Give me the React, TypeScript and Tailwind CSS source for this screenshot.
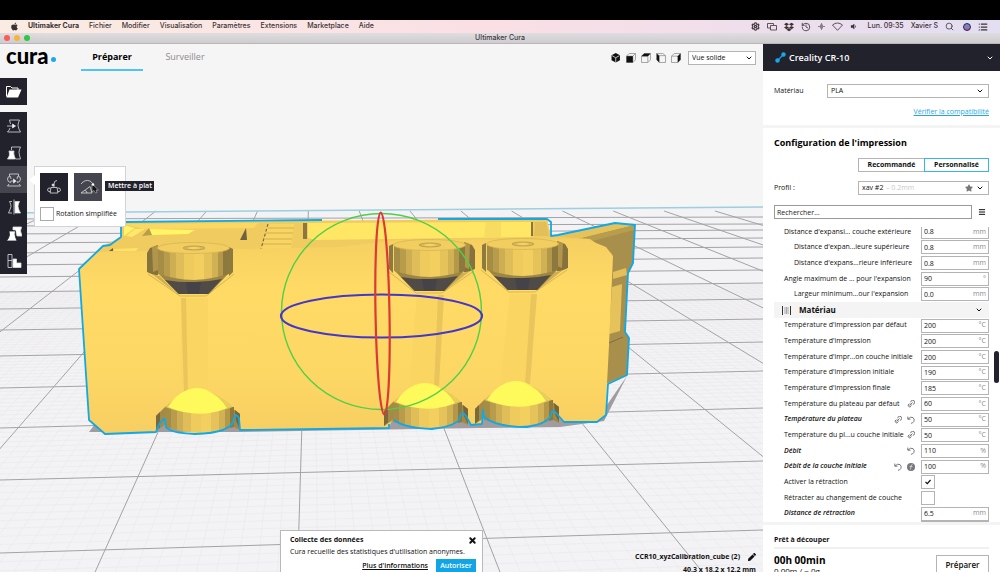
import { useState } from 'react';
import type { ReactNode } from 'react';
import { ChevronDown, History, List, Menu, Search, Settings, X } from 'lucide-react';
import { FaApple, FaDropbox, FaPen, FaStar, FaVolumeDown } from 'react-icons/fa';

const menus = ['Fichier', 'Modifier', 'Visualisation', 'Paramètres', 'Extensions', 'Marketplace', 'Aide'];

type Setting = {
  label: string;
  value?: string;
  unit?: string;
  checked?: boolean;
  indent?: boolean;
  italic?: boolean;
  icons?: ('link' | 'reset' | 'formula')[];
  section?: boolean;
};

const settings: Setting[] = [
  { label: "Distance d'expansi... couche extérieure", value: '0.8', unit: 'mm' },
  { label: "Distance d'expan...ieure supérieure", value: '0.8', unit: 'mm', indent: true },
  { label: "Distance d'expans...rieure inférieure", value: '0.8', unit: 'mm', indent: true },
  { label: "Angle maximum de ... pour l'expansion", value: '90', unit: '°' },
  { label: "Largeur minimum...our l'expansion", value: '0.0', unit: 'mm', indent: true },
  { label: 'Matériau', section: true },
  { label: "Température d'impression par défaut", value: '200', unit: '°C' },
  { label: "Température d'impression", value: '200', unit: '°C' },
  { label: "Température d'impr...on couche initiale", value: '200', unit: '°C' },
  { label: "Température d'impression initiale", value: '190', unit: '°C' },
  { label: "Température d'impression finale", value: '185', unit: '°C' },
  { label: 'Température du plateau par défaut', value: '60', unit: '°C', icons: ['link'] },
  { label: 'Température du plateau', value: '50', unit: '°C', italic: true, icons: ['link', 'reset'] },
  { label: 'Température du pl...u couche initiale', value: '50', unit: '°C', icons: ['link'] },
  { label: 'Débit', value: '110', unit: '%', italic: true, icons: ['reset'] },
  { label: 'Débit de la couche initiale', value: '100', unit: '%', italic: true, icons: ['reset', 'formula'] },
  { label: 'Activer la rétraction', checked: true },
  { label: 'Rétracter au changement de couche', checked: false },
  { label: 'Distance de rétraction', value: '6.5', unit: 'mm', italic: true },
];

const MenuBar = () => (
  <header className="flex h-[13px] shrink-0 items-center bg-gradient-to-r from-[#faece2] via-[#fadfe5] to-[#e3def2] pl-2.5 pr-3 font-[Inter,sans-serif] text-[7px] font-medium text-[#3c3236]">
    <FaApple size={9} className="mr-[9px]" />
    <nav className="flex gap-[10px]">
      <span className="font-bold">Ultimaker Cura</span>
      {menus.map((m) => (
        <span key={m}>{m}</span>
      ))}
    </nav>
    <div className="ml-auto flex items-center gap-[7px]">
      <Settings size={9} strokeWidth={3} />
      <svg width="10" height="9" viewBox="0 0 10 9" fill="none" stroke="currentColor" strokeWidth=".8">
        <path d="M3 6H.5V1.5h6V3M3.500 3.500h6v4.500h-6z" />
      </svg>
      <FaDropbox size={10} />
      <History size={10} />
      <svg width="7" height="9" viewBox="0 0 7 9" fill="none" stroke="#8b7f88" strokeWidth="1">
        <path d="M0 4.500H7M2.500 2.500V6.500M4.500 2.500V6.500M3.500 1V8" />
      </svg>
      <svg width="11" height="9" viewBox="0 0 11 9" fill="none" stroke="currentColor" strokeWidth=".8">
        <path d="M.5 3Q5.500-1 10.500 3L5.500 8.300z" />
      </svg>
      <FaVolumeDown size={7} />
      <span className="pl-1">Lun. 09:35</span>
      <span>Xavier S</span>
      <Search size={9} />
      <span className="ml-0.5 h-2 w-2 rounded-full border border-[#2a2440] bg-gradient-to-b from-[#3f9ad8] to-[#b0559c]" />
      <List size={10} strokeWidth={3} />
    </div>
  </header>
);

const TitleBar = () => (
  <div className="relative flex h-[11px] shrink-0 items-center justify-center border-b border-[#b9b6ba] bg-gradient-to-b from-[#e0dde1] to-[#cfccd0] font-[Inter,sans-serif] text-[7px] text-[#3c393d]">
    <div className="absolute left-1 flex gap-1">
      <i className="h-1.5 w-1.5 rounded-full bg-[#fc5b57]" />
      <i className="h-1.5 w-1.5 rounded-full bg-[#f6b535]" />
      <i className="h-1.5 w-1.5 rounded-full bg-[#2fc843]" />
    </div>
    Ultimaker Cura
  </div>
);

/* Build plate grid: y of every major line at the left and right border */
const leftY = [553, 480, 428, 388, 356, 330, 309, 292, 277, 265, 253, 243, 234, 226, 219];
const rightY = [530, 461, 408, 371, 342, 319, 299, 283, 270, 258, 247, 238, 230, 224, 217];
const horizon = 90;
const lerpDepth = (a: number, b: number, t: number) =>
  horizon + 1 / ((1 - t) / (a - horizon) + t / (b - horizon));

const tenths = [1, 2, 3, 4, 5, 6, 7, 8, 9];

const Grid = () => {
  const major: ReactNode[] = [];
  const minor: ReactNode[] = [];
  const ly = [659, ...leftY];
  const ry = [625, ...rightY];
  ly.forEach((y, i) => {
    major.push(<path key={`h${i}`} d={`M0 ${y}L763 ${ry[i]}`} />);
    if (i < 8) {
      tenths.forEach((t) =>
        minor.push(
          <path key={`h${i}-${t}`} d={`M0 ${lerpDepth(y, ly[i + 1], t / 10)}L763 ${lerpDepth(ry[i], ry[i + 1], t / 10)}`} />,
        ),
      );
    }
  });
  for (let k = -80; k <= 90; k++) {
    const s = -0.03 + 0.042 * k;
    const far = k % 10 === 0 ? 211 : 285;
    const line = <path key={`v${k}`} d={`M${312 + s * (far - horizon)} ${far}L${312 + s * 490} 580`} />;
    (k % 10 === 0 ? major : minor).push(line);
  }
  return (
    <g fill="none">
      <path d="M0 213L763 207V572H0z" fill="#f3f2f4" />
      <g stroke="#e9e8eb" strokeWidth=".6">{minor}</g>
      <g stroke="#a3a2a5" strokeWidth="1">{major}</g>
      <path d="M0 213L763 207" stroke="#9ccfdf" strokeWidth="1.6" />
    </g>
  );
};

const stripes = [0, 6, 12, 18, 26, 36, 46, 54, 60, 65];
const shades = ['#a68d45', '#b89c4b', '#cdae53', '#dfbd58', '#efcb5e', '#f3cf60', '#e5c25a', '#d0b154', '#b3984a', '#8d783d'];

/* One wheel mount: upper cylinder and cone, shaft, lower dome and cylinder.
   The wall of the recess shows on the left or on the right of the upper cylinder. */
const Wheel = ({ x, y, bx, by, wall }: { x: number; y: number; bx: number; by: number; wall: 'left' | 'right' }) => (
  <g>
    <g transform={`translate(${x} ${y})`}>
      <g transform={wall === 'right' ? 'translate(70 0) scale(-1 1)' : undefined}>
        <path d="M-11 5L-8 0 0-3V27L-4 27-11 24z" fill="#85723c" />
        <path d="M-6-1L0-3V22L-5 24z" fill="#b0954a" />
        <path d="M71-1L75 1V24L71 28z" fill="#8e7a40" />
        <path d="M-10 26L22 48 48 48 76 26" fill="none" stroke="#d6b555" />
        <path d="M-6 26L18 45 2 28z" fill="#d0af53" />
      </g>
      <path d="M1 26L20 46H51L70 26z" fill="#9d8644" />
      <path d="M7 32L21 46H50L64 31Q36 37 7 32z" fill="#504b46" />
      <path d="M28 34L30 46H41L43 34z" fill="#464348" />
      {stripes.map((s, i) => {
        const e = stripes[i + 1] ?? 71;
        const dip = (v: number) => 26 + 6 * Math.sin((v / 71) * Math.PI);
        return <path key={s} d={`M${s} 1H${e}V${dip(e)}L${s} ${dip(s)}z`} fill={shades[i]} />;
      })}
      <ellipse cx="35.500" cy="0" rx="36" ry="5.500" fill="#f2cd60" stroke="#d6b656" strokeWidth=".8" />
      <ellipse cx="36" cy="0" rx="11" ry="2" fill="#dab957" stroke="#a58d48" strokeWidth=".6" />
      <ellipse cx="36" cy="0" rx="6" ry="1.200" fill="#f7d263" />
    </g>
    <path d={`M${x + 23} ${y + 50}H${x + 50}L${bx + 43} ${by - 14}H${bx + 16}z`} fill="#fbd562" />
    {wall === 'left' ? (
      <path d={`M${x + 23} ${y + 50}h5L${bx + 23} ${by - 14}h-4z`} fill="#e9c55c" />
    ) : (
      <path d={`M${x + 44} ${y + 50}h6L${bx + 46} ${by - 16}h-5z`} fill="#e9c55c" />
    )}
    <g transform={`translate(${bx} ${by})`}>
      <path d="M-9 9L1-1 3 15-3 20-9 24z" fill="#a38b47" />
      <path d="M-9 9L-5 5V20L-9 24z" fill="#7a6a3b" />
      <path d="M64-1L75 7V23L69 20 67 13z" fill="#a08845" />
      <path d="M70 3L75 7V22L71 14z" fill="#75653a" />
      {stripes.map((s, i) => {
        const e = Math.min(stripes[i + 1] ?? 69, 69);
        const dip = (v: number) => 20 + 6 * Math.sin((v / 69) * Math.PI);
        return <path key={s} d={`M${s} 0H${e}V${dip(e)}L${s} ${dip(s)}z`} fill={shades[i]} />;
      })}
      <path d="M0 0Q3-3 10-8L58-8 68 0Q34 13 0 0z" fill="#e2c259" />
      <path d="M3 0Q10-12 22-17Q32-21 42-17Q54-12 62 1Q34 13 3 0z" fill="#fffa5b" />
      <path d="M40-17Q54-12 62 0L67 0Q56-12 40-17z" fill="#e8cf55" />
    </g>
  </g>
);

const outline =
  'M121 222L322 220M438 219L547 219L551 222V236L558 235L615 223L635 225L633 263L628 273L625 332L629 338L627 375L608 384L606 415L597 422H564L557 414Q552 408 551 415Q549 423 527 427Q496 427 484 417L483 410L482 424L471 425L466 416Q461 409 460 418Q457 426 432 429Q404 428 394 420M389 424V428L240 430L239 418Q235 412 234 419Q232 433 195 434Q170 433 166 427L165 419Q160 420 156 432L105 434L89 420L79 269L103 246L110 245L121 237V222';

const Scene = () => (
  <svg
    className="absolute inset-0 h-full w-full"
    viewBox="0 44 763 528"
    preserveAspectRatio="xMidYMax slice"
    role="img"
    aria-label="CCR10_xyzCalibration_cube"
  >
    <rect y="44" width="763" height="528" fill="#f5f5f5" />
    <Grid />
    {/* shadow */}
    <path d="M89 432L95 424 600 415 627 376 604 421 560 427 480 428 240 432z" fill="#a19c9f" />
    {/* side faces */}
    <path d="M570 241L615 223 635 225 633 263 628 273 625 332 629 338 627 375 606 384 600 250z" fill="#a8904c" />
    <path d="M551 237L615 223 635 225 578 239z" fill="#e6c25a" />
    <path d="M578 239L635 225 634 230 592 241z" fill="#b89d4e" />
    <path d="M613 279L627 275 626 268 613 272z" fill="#e3c05a" />
    <path d="M612 287L622 284 620 331 609 334z" fill="#e5c25b" />
    <path d="M609 343L623 337" stroke="#7e6d3f" />
    {/* top faces */}
    <path d="M121 222L547 219 551 236 590 239 612 254 400 262 85 268 79 269 103 246 121 237z" fill="#f0cb5f" />
    <path d="M124 225L135 228 124 236z" fill="#fff36a" />
    <path d="M126 236L135 229 145 229 132 237z" fill="#ffe968" />
    <path d="M124 224L258 223 254 228 143 229z" fill="#fbd863" />
    <path d="M148 229L195 230 188 234 152 235z" fill="#fff565" />
    <path d="M142 236L149 228 152 235z" fill="#b99d4c" />
    <path d="M240 240L246 228 247 240z" fill="#6e6140" />
    <path d="M268 224H294L291 249H261z" fill="#f8d562" />
    <path d="M268 228h26M266 233h27M265 239h27M263 244h28" stroke="#cfb053" strokeWidth="1.200" />
    <path d="M268 224L261 249" stroke="#7e6d3d" strokeWidth="1.200" strokeDasharray="3 2" />
    <path d="M303 223h4v16h-4z" fill="#8b773f" />
    <path d="M308 223L532 222 531 237 316 240 308 238z" fill="#ffe765" />
    <path d="M486 222H501V237H484z" fill="#f8dc62" />
    <path d="M532 222V236" stroke="#6b5e3a" strokeWidth="1.600" />
    <path d="M535 222H546L549 236H534z" fill="#e2bf59" />
    {/* front face */}
    <path
      d="M79 269L97 252 340 247 398 240 586 239 606 247 613 256 609 345 607 384 606 415 597 422H564L550 410 484 410 482 424 471 425 460 412 395 412 389 428 240 430 234 415 165 415 156 432 105 434 89 420z"
      fill="url(#front)"
    />
    <path d="M109 251L113 248 113 251z" fill="#6b5e3a" />
    <path d="M114 249L138 248 136 251H114z" fill="#ffe266" />
    <defs>
      <linearGradient id="front" x1="0" y1="0" x2="0" y2="1">
        <stop offset="0" stopColor="#f5d061" />
        <stop offset=".25" stopColor="#ffda65" />
        <stop offset=".7" stopColor="#fdd764" />
        <stop offset="1" stopColor="#f6ce62" />
      </linearGradient>
    </defs>
    <Wheel x={158} y={248} bx={165} by={407} wall="left" />
    <Wheel x={394} y={245} bx={393} by={402} wall="right" />
    <Wheel x={487} y={244} bx={484} by={400} wall="right" />
    <path d={outline} fill="none" stroke="#10a8e6" strokeWidth="1.800" strokeLinejoin="round" />
    {/* rotation handles */}
    <ellipse cx="381.500" cy="311.500" rx="100" ry="98" fill="none" stroke="#4fd047" strokeWidth="1.400" />
    <ellipse cx="381.500" cy="316" rx="100.500" ry="21.500" fill="none" stroke="#4338c8" strokeWidth="2.200" />
    <ellipse cx="382.500" cy="313.500" rx="7" ry="101" fill="none" stroke="#dc3835" strokeWidth="2.200" transform="rotate(-1 382 313)" />
  </svg>
);

const ToolIcon = ({ children }: { children: ReactNode }) => (
  <svg width="16" height="16" viewBox="0 0 16 16" fill="none" stroke="#dcdce0" strokeWidth=".8" strokeLinejoin="round">
    {children}
  </svg>
);

const tools = [
  {
    name: 'Déplacer',
    icon: (
      <ToolIcon>
        <path d="M4.500 6L3.500 2H13.500Q12 5 12 7.500Q12.500 11 14.500 14H1.500Q3.500 12 4 10" />
        <path d="M1 8H7" />
        <path d="M6.500 6L9.500 8 6.500 10z" fill="#fff" />
      </ToolIcon>
    ),
  },
  {
    name: 'Mettre à l’échelle',
    icon: (
      <ToolIcon>
        <path d="M5.500 5V2H14.500Q13 5 13 7.500Q13.500 11 14.500 14H10" />
        <path d="M3 6H8Q7.500 8 8 10Q8.500 12 9.500 14H1.500Q3 12 3.500 10Q3.500 8 3 6z" fill="#fff" />
      </ToolIcon>
    ),
  },
  {
    name: 'Tourner',
    icon: (
      <ToolIcon>
        <path d="M3.500 4V2H12.500V4M3 12L1.500 14H14.500L13 12" />
        <path d="M4.500 4.500Q1.500 4 1.500 7Q1.500 10 4.500 10.500M11.500 4.500Q14.500 4 14.500 7Q14.500 10 11.500 10.500M4.500 4.500L5 7M11.500 4.500L11 7M4.500 10.500L5 9M11.500 10.500L11 9" />
        <path d="M5 9H8" />
        <path d="M7.500 7L10 9 7.500 11z" fill="#fff" />
      </ToolIcon>
    ),
  },
  {
    name: 'Miroir',
    icon: (
      <ToolIcon>
        <path d="M6 2.500H3.500Q5 5 5 7.500Q4 11 2.500 14H6M8 .5V15.500" />
        <path d="M9 2.500H13.500Q12 5 12 7.500Q12.500 11 14.500 14H9z" fill="#fff" />
      </ToolIcon>
    ),
  },
  {
    name: 'Paramètres par modèle',
    icon: (
      <ToolIcon>
        <path d="M7 1H15.500L14.500 5 16 10H11L9.500 4H7z" fill="#fff" />
        <path d="M3 5H9.500Q8.500 8 9.500 11L11 15H.5Q3 12 3.500 9z" fill="#fff" stroke="#22222c" />
      </ToolIcon>
    ),
  },
  {
    name: 'Bloqueur de support',
    icon: (
      <ToolIcon>
        <path d="M2 1.500H6V14.500H2zM2 7.500H6" />
        <path d="M7 6H10.500V10H15V14.500H7z" fill="#fff" />
      </ToolIcon>
    ),
  },
];

const Toolbar = () => {
  const [active, setActive] = useState('Tourner');
  return (
    <div className="flex w-[27px] flex-col gap-[7px] pt-[7px]">
      <button aria-label="Ouvrir" className="flex h-[27px] items-center justify-center bg-[#22222c]">
        <svg width="17" height="13" viewBox="0 0 17 13">
          <path d="M1.500 11.500V1.500H5.500L7 3H13V5" fill="none" stroke="#fff" />
          <path d="M4.500 4.500H16.500L13 12.500H1.500z" fill="#fff" />
        </svg>
      </button>
      <div className="flex flex-col bg-[#22222c]">
        {tools.map((t) => (
          <button
            key={t.name}
            aria-label={t.name}
            onClick={() => setActive(t.name)}
            className={`flex h-[27px] items-center justify-center ${active === t.name ? 'bg-[#45454f]' : ''}`}
          >
            {t.icon}
          </button>
        ))}
      </div>
    </div>
  );
};

const RotatePanel = () => (
  <div className="absolute left-[34px] top-[95px] z-10 w-[92px] border border-[#d4d4d8] bg-white px-[5px] pb-[5px] pt-1.5">
    <svg className="absolute -left-1.5 top-2" width="6" height="10" viewBox="0 0 6 10">
      <path d="M6 0L0 5 6 10z" fill="#fff" />
    </svg>
    <div className="flex gap-1.5">
      <button aria-label="Réinitialiser" className="flex h-7 w-7 items-center justify-center bg-[#22222c]">
        <ToolIcon>
          <path d="M5 8.500H11L12 14H4zM4.500 12.500Q1.500 13 1.500 11Q1.500 8.500 4.500 9M11.500 12.500Q14.500 13 14.500 11Q14.500 8.500 11.500 9M8 8V5Q8 1.500 11 1.500" />
          <circle cx="7" cy="6" r="1" fill="#fff" />
        </ToolIcon>
      </button>
      <button aria-label="Mettre à plat" className="relative flex h-7 w-7 items-center justify-center bg-[#45454f]">
        <ToolIcon>
          <path d="M1 5Q5 0 10 2Q13 4 14 7M1 14L10 7.500 12 14zM5 11.500Q7 12 7 14" />
        </ToolIcon>
        <svg className="absolute left-[17px] top-2.5" width="8" height="11" viewBox="0 0 8 11">
          <path d="M1 1V9L3 7.500 4.500 10 6 9.500 5 7H7.500z" fill="#111" stroke="#ddd" strokeWidth=".5" />
          <circle cx="2" cy="1.500" r="1.200" fill="#fff" />
        </svg>
      </button>
    </div>
    <label className="mt-1.5 flex items-center gap-0.5 whitespace-nowrap text-[7px] leading-[14px]">
      <input type="checkbox" className="h-3.5 w-3.5 appearance-none border border-[#aaa] bg-white" />
      Rotation simplifiée
    </label>
    <span className="absolute left-[70px] top-3.5 whitespace-nowrap bg-[#22222c] pl-[3px] pr-0.5 text-[7px] font-semibold leading-[10px] text-white">
      Mettre à plat
    </span>
  </div>
);

const viewFaces = [
  { name: '3D', fill: 'M4.500 0L8.500 2.200V7L4.500 9 .5 7V2.200z', cut: true },
  { name: 'Avant', fill: 'M.5 3H6.500V9H.5z' },
  { name: 'Haut', fill: 'M.5 3L3 .5H9L6.500 3z' },
  { name: 'Gauche', fill: 'M.5 .5L3 2.500V9L.5 6.500z', flip: true },
  { name: 'Droite', fill: 'M6.500 3L9 .5V6.500L6.500 9z' },
];

const ViewIcon = ({ face }: { face: (typeof viewFaces)[number] }) => (
  <svg width="10" height="10" viewBox="0 0 9.500 9.500">
    {!face.cut && (
      <path
        d={face.flip ? 'M3 2.500H9V9H3zM.5 .5H6.500L9 2.500M.5 .5L3 2.500' : 'M.5 3H6.500V9H.5zM.5 3L3 .5H9V6.500L6.500 9M6.500 3L9 .5'}
        fill="none"
        stroke="#888"
        strokeWidth=".7"
      />
    )}
    <path d={face.fill} fill="#111" />
    {face.cut && <path d="M1 2.500L4.500 4.500 8 2.500M4.500 4.500V9" stroke="#ddd" strokeWidth=".8" fill="none" />}
  </svg>
);

const TopBar = () => (
  <div className="relative flex h-[27px] shrink-0 items-stretch pr-[7px]">
    <div className="flex w-[81px] items-center pb-1 pl-1.5 font-[Lato,sans-serif] text-[22px] font-black leading-[22px] text-black">
      cura<span className="ml-0.5 mt-2 h-[5px] w-[5px] rounded-full bg-[#1ba9e8]" />
    </div>
    <nav className="flex text-[9px]">
      <a href="#preparer" className="flex w-[62px] items-center justify-center border-b-2 border-[#4fc1fb] font-bold text-black">
        Préparer
      </a>
      <a href="#surveiller" className="ml-[11px] flex w-[62px] items-center justify-center border-b-2 border-transparent text-[#8c8c8c]">
        Surveiller
      </a>
    </nav>
    <div className="ml-auto flex items-center gap-[5px]">
      {viewFaces.map((f) => (
        <button key={f.name} aria-label={f.name}>
          <ViewIcon face={f} />
        </button>
      ))}
      <div className="relative ml-0.5 flex">
        <select aria-label="Vue" className="h-3.5 w-[68px] appearance-none border border-[#b4b4b4] bg-white pl-[3px] text-[7px] leading-3">
          <option>Vue solide</option>
        </select>
        <ChevronDown size={8} strokeWidth={3} className="pointer-events-none absolute right-[3px] top-[3px]" />
      </div>
    </div>
  </div>
);

const Message = () => (
  <div className="absolute -bottom-2 left-[280px] z-10 w-[203px] border border-[#b9b9bc] bg-white px-[9px] pb-1.5 pt-[3px] text-[7px] leading-[12px]">
    <div className="flex items-center justify-between">
      <strong>Collecte des données</strong>
      <button aria-label="Fermer" className="-mr-1">
        <X size={9} strokeWidth={5} />
      </button>
    </div>
    <p className="whitespace-nowrap">Cura recueille des statistiques d'utilisation anonymes.</p>
    <div className="mt-px flex items-center justify-end gap-2 -mr-[3px]">
      <a href="#infos" className="font-semibold underline">
        Plus d'informations
      </a>
      <button className="h-3.5 w-10 bg-[#12a5e5] font-semibold text-white">Autoriser</button>
    </div>
  </div>
);

const RowIcon = ({ icon }: { icon: 'link' | 'reset' | 'formula' }) => {
  if (icon === 'formula') {
    return (
      <svg width="8" height="8" viewBox="0 0 8 8">
        <circle cx="4" cy="4" r="4" fill="#77777c" />
        <path d="M5.500 1.500Q4 1.500 4 3.500L3.500 6.500M2.500 3.500H5.500" stroke="#ddd" strokeWidth=".8" fill="none" />
      </svg>
    );
  }
  return (
    <svg width="8" height="8" viewBox="0 0 8 8" fill="none" stroke="currentColor" strokeWidth="1">
      {icon === 'link' ? (
        <path d="M3.700 2.200A2 2 0 1 1 5.800 4.300M1.800 4A1.600 1.600 0 1 0 4 6.300M2.500 5.500L5.500 2.500M2.400 3.800Q4.400 3.800 4.300 5.700" />
      ) : (
        <path d="M.8.600V3.200H3.500M1 3Q3.500.200 6 1.600Q8 3.500 6.800 5.600Q5.800 7.200 4 7.300" />
      )}
    </svg>
  );
};

const iconNames = { link: 'Lié', reset: 'Réinitialiser', formula: 'Formule' };

const SettingRow = ({ setting }: { setting: Setting }) => {
  const id = setting.label.replace(/\W+/g, '-');
  if (setting.section) {
    return (
      <button className="flex items-center bg-[#f4f4f4] pl-2 pr-1.5 text-left text-[8px] font-bold">
        <svg width="9" height="9" viewBox="0 0 9 9" className="mr-2">
          <path d="M.5 0V9M8.500 0V9" stroke="#333" />
          <path d="M3 1V8M4.500 1V8M6 1V8" stroke="#aaa" />
        </svg>
        {setting.label}
        <ChevronDown size={8} strokeWidth={3} className="ml-auto" />
      </button>
    );
  }
  return (
    <div className="flex items-center">
      <label
        htmlFor={id}
        className={`flex-1 whitespace-nowrap ${setting.indent ? 'pl-5' : 'pl-2.5'} ${setting.italic ? 'font-semibold italic' : ''}`}
      >
        {setting.label}
      </label>
      <div className="flex gap-[5px] pr-1.5 text-[#77777c]">
        {setting.icons?.map((icon) => (
          <button key={icon} aria-label={iconNames[icon]}>
            <RowIcon icon={icon} />
          </button>
        ))}
      </div>
      <div className="w-[68px]">
        {setting.value === undefined ? (
          <span className="relative flex">
            <input id={id} type="checkbox" defaultChecked={setting.checked} className="peer h-3.5 w-3.5 appearance-none border border-[#b4b4b4] bg-white" />
            <svg className="pointer-events-none absolute left-1 top-1 hidden peer-checked:block" width="6" height="6" viewBox="0 0 6 6">
              <path d="M.5 3L2.300 4.700 5.500 1" stroke="#111" strokeWidth="1.200" fill="none" />
            </svg>
          </span>
        ) : (
          <span className="flex h-3.5 items-center border border-[#b4b4b4] bg-white pl-0.5 pr-0.5">
            <input id={id} defaultValue={setting.value} className="h-3 w-0 min-w-0 flex-1 bg-transparent outline-none" />
            <span className="text-[#8a8a8e]">{setting.unit}</span>
          </span>
        )}
      </div>
    </div>
  );
};

const Sidebar = () => (
  <aside className="relative flex w-[237px] shrink-0 flex-col bg-white text-[7px]">
    <button className="flex h-[27px] shrink-0 items-center bg-[#22222c] pl-3 pr-1.5 text-left text-[9px] font-semibold text-white">
      <svg width="11" height="11" viewBox="0 0 11 11" className="mr-[3px]">
        <path d="M2 9L9 2" stroke="#159fdb" strokeWidth="1.300" />
        <circle cx="2.500" cy="8.500" r="2.200" fill="#16a9ea" />
        <circle cx="8.500" cy="2.500" r="2.200" fill="#16a9ea" />
      </svg>
      Creality CR-10
      <ChevronDown size={8} strokeWidth={3} className="ml-auto" />
    </button>

    <section className="flex flex-col gap-2 border-b-[3px] border-[#f4f4f4] pb-[7px] pl-[11px] pr-[11px] pt-[13px]">
      <div className="flex items-center justify-between">
        <label htmlFor="material">Matériau</label>
        <div className="relative flex">
          <select id="material" className="h-3.5 w-[162px] appearance-none border border-[#b4b4b4] bg-white pl-[3px] leading-3">
            <option>PLA</option>
          </select>
          <ChevronDown size={8} strokeWidth={3} className="pointer-events-none absolute right-[5px] top-[3px]" />
        </div>
      </div>
      <a href="#compat" className="self-end leading-[12px] text-[#1fa9e0] underline">
        Vérifier la compatibilité
      </a>
    </section>

    <section className="flex min-h-0 flex-1 flex-col border-b-[3px] border-[#f4f4f4] pl-[11px] pr-[11px] pt-2">
      <h2 className="text-[9px] font-bold leading-[14px] text-black">Configuration de l'impression</h2>
      <div className="mt-2 flex self-end font-bold">
        <button className="h-3.5 w-[66px] border border-r-0 border-[#b4b4b4]">Recommandé</button>
        <button className="h-3.5 w-[65px] border border-[#35b5ec]">Personnalisé</button>
      </div>
      <div className="mt-[9px] flex items-center justify-between">
        <label htmlFor="profile">Profil :</label>
        <div className="relative flex">
          <select id="profile" className="h-3.5 w-[131px] appearance-none border border-[#b4b4b4] bg-white pl-[3px] leading-3">
            <option>xav #2</option>
          </select>
          <span className="pointer-events-none absolute left-7 top-0.5 leading-[10px] text-[#c8c8cc]">– 0.2mm</span>
          <FaStar size={8} className="pointer-events-none absolute right-4 top-[3px] text-[#77777c]" />
          <ChevronDown size={8} strokeWidth={3} className="pointer-events-none absolute right-[5px] top-[3px]" />
        </div>
      </div>
      <div className="mt-2.5 flex items-center gap-1.5">
        <input
          aria-label="Rechercher"
          placeholder="Rechercher..."
          className="h-3.5 w-0 flex-1 border border-[#999] bg-white pl-0.5 placeholder:text-[#1a1a1a]"
        />
        <button aria-label="Visibilité des paramètres" className="mr-[3px]">
          <Menu size={8} strokeWidth={3} />
        </button>
      </div>
      <div className="mt-2 min-h-0 flex-1 overflow-hidden">
        <div className="-mt-[3px] grid h-[calc(100%+18px)] grid-rows-[repeat(20,minmax(0,1fr))]">
          {settings.map((s) => (
            <SettingRow key={s.label} setting={s} />
          ))}
          <div className="h-3.5 w-[68px] justify-self-end border border-[#b4b4b4]" />
        </div>
      </div>
    </section>

    <footer className="h-[47px] shrink-0 overflow-hidden pl-[11px] pr-[11px] pt-[9px]">
      <p className="font-bold leading-[12px]">Prêt à découper</p>
      <div className="mt-px h-0.5 bg-[#f0f0f0]" />
      <div className="mt-1 flex justify-between">
        <div>
          <p className="text-[10px] font-bold leading-[14px] text-black">00h 00min</p>
          <p className="text-[8px] leading-[8px]">0.00m / ~ 0g</p>
        </div>
        <button className="mt-0.5 h-5 w-[53px] border border-[#b4b4b4] text-[8px] font-semibold">Préparer</button>
      </div>
    </footer>
    <div className="absolute right-px top-[307px] h-8 w-[5px] rounded-full bg-[#22222c]" />
  </aside>
);

export default function App() {
  return (
    <div className="flex h-screen flex-col overflow-hidden bg-[#f5f5f5] font-['Open_Sans','Noto_Sans',sans-serif] font-medium text-[#111]">
      <div className="h-5 shrink-0 bg-black" />
      <MenuBar />
      <TitleBar />
      <main className="flex min-h-0 flex-1">
        <div className="relative flex min-w-0 flex-1 flex-col overflow-hidden">
          <Scene />
          <TopBar />
          <div className="relative flex-1">
            <Toolbar />
            <RotatePanel />
          </div>
          <Message />
          <div className="absolute -bottom-1 right-[7px] text-right text-[7px] font-bold leading-[13px]">
            <p className="flex items-center justify-end gap-2">
              CCR10_xyzCalibration_cube (2)
              <FaPen size={8} />
            </p>
            <p>40.3 x 18.2 x 12.2 mm</p>
          </div>
        </div>
        <Sidebar />
      </main>
    </div>
  );
}
